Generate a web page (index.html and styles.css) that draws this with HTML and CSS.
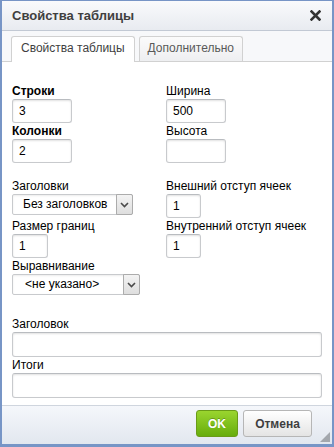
FILE: index.html
```html
<!DOCTYPE html>
<html lang="ru">
<head>
<meta charset="utf-8">
<title>Свойства таблицы</title>
<link rel="stylesheet" href="styles.css">
</head>
<body>
<div class="dialog">
  <div class="titlebar">
    <span class="title">Свойства таблицы</span>
    <svg class="close" width="11" height="11" viewBox="0 0 11 11"><path d="M1.5 1.5 L9.5 9.5 M9.5 1.5 L1.5 9.5" stroke="#333" stroke-width="2.6" stroke-linecap="square"/></svg>
  </div>
  <div class="tabs">
    <div class="tab active">Свойства таблицы</div>
    <div class="tab">Дополнительно</div>
  </div>
  <div class="body">
    <div class="grid2">
      <div class="col">
        <div class="field"><label class="lbl req">Строки</label><input class="txt w60" value="3"></div>
        <div class="field"><label class="lbl req">Колонки</label><input class="txt w60" value="2"></div>
      </div>
      <div class="col">
        <div class="field"><label class="lbl">Ширина</label><input class="txt w60" value="500"></div>
        <div class="field"><label class="lbl">Высота</label><input class="txt w60" value=""></div>
      </div>
    </div>
    <div class="grid2 sec-b">
      <div class="col">
        <div class="field"><label class="lbl">Заголовки</label>
          <div class="ctl"><div class="select w121"><span class="val">Без заголовков</span><span class="arrow"><svg width="9" height="6" viewBox="0 0 9 6"><path d="M1 1 L4.5 4.5 L8 1" fill="none" stroke="#4a4a4a" stroke-width="1.6"/></svg></span></div></div>
        </div>
        <div class="field"><label class="lbl">Размер границ</label><input class="txt w36" value="1"></div>
        <div class="field"><label class="lbl">Выравнивание</label>
          <div class="ctl"><div class="select w128"><span class="val pad12">&lt;не указано&gt;</span><span class="arrow"><svg width="9" height="6" viewBox="0 0 9 6"><path d="M1 1 L4.5 4.5 L8 1" fill="none" stroke="#4a4a4a" stroke-width="1.6"/></svg></span></div></div>
        </div>
      </div>
      <div class="col">
        <div class="field"><label class="lbl">Внешний отступ ячеек</label><input class="txt w35" value="1"></div>
        <div class="field"><label class="lbl">Внутренний отступ ячеек</label><input class="txt w35" value="1"></div>
      </div>
    </div>
    <div class="sec-c">
      <div class="field"><label class="lbl">Заголовок</label><input class="txt wide" value=""></div>
      <div class="field"><label class="lbl">Итоги</label><input class="txt wide" value=""></div>
    </div>
  </div>
  <div class="footer">
    <button class="btn ok">OK</button>
    <button class="btn cancel">Отмена</button>
    <svg class="grip" width="10" height="10" viewBox="0 0 10 10"><path d="M10 0 L10 10 L0 10 Z" fill="#a3a7ad"/></svg>
  </div>
</div>
</body>
</html>
```
FILE: styles.css
```css
* { box-sizing: border-box; }
html, body { margin: 0; padding: 0; }
body {
  width: 334px;
  height: 447px;
  overflow: hidden;
  font-family: "Liberation Sans", Arial, sans-serif;
  font-size: 12px;
  color: #000;
  background: #fff;
}
.dialog {
  width: 334px;
  height: 447px;
  border: 2px solid #7795c6;
  border-top-width: 1px;
  border-bottom-width: 3px;
  display: flex;
  flex-direction: column;
  background: #fff;
}
.titlebar {
  flex: none;
  height: 30px;
  display: flex;
  align-items: center;
  justify-content: space-between;
  padding: 0 11px 0 10px;
  background: linear-gradient(#f9fafc, #e8ebf0);
  border-bottom: 1px solid #c2c9d4;
}
.title {
  font-weight: bold;
  font-size: 13px;
  color: #3f3f3f;
}
.close { display: block; margin-top: -1px; }
.tabs {
  flex: none;
  height: 31px;
  display: flex;
  align-items: flex-end;
  gap: 4px;
  padding-left: 9px;
  background: #f7f8fa;
  border-bottom: 1px solid #d1d1d1;
}
.tab {
  height: 25px;
  line-height: 23px;
  padding: 0 8px;
  border: 1px solid #d1d1d1;
  border-bottom: none;
  border-radius: 3px 3px 0 0;
  background: linear-gradient(#fbfbfb, #eeeff1);
  color: #595959;
  font-size: 12px;
}
.tab.active {
  height: 26px;
  margin-bottom: -1px;
  padding: 0 9px;
  background: #fff;
  color: #3f3f3f;
}
.body {
  flex: 1;
  padding: 21px 10px 0 10px;
}
.grid2 {
  display: grid;
  grid-template-columns: 154px 1fr;
}
.field { display: flex; flex-direction: column; align-items: flex-start; }
.lbl {
  display: block;
  height: 16px;
  line-height: 16px;
  white-space: nowrap;
}
.lbl.req { font-weight: bold; }
.txt {
  display: block;
  height: 24px;
  margin: 0;
  padding: 0 6px;
  border: 1px solid #c8cacd;
  border-top-color: #b9bcc0;
  border-radius: 3px;
  box-shadow: inset 0 1px 2px rgba(0,0,0,.12);
  background: #fff;
  font: 12px "Liberation Sans", Arial, sans-serif;
  color: #000;
  outline: none;
}
.w60 { width: 60px; }
.w36 { width: 36px; }
.w35 { width: 35px; }
.wide { width: 310px; height: 25px; }
.ctl { height: 24px; }
.select {
  display: flex;
  align-items: stretch;
  height: 21px;
  border: 1px solid #c8cacd;
  border-radius: 2px;
  box-shadow: inset 0 1px 2px rgba(0,0,0,.08);
  background: #fff;
}
.w121 { width: 121px; }
.w128 { width: 128px; }
.select .val {
  flex: 1;
  padding-left: 10px;
  line-height: 19px;
  white-space: nowrap;
  overflow: hidden;
}
.select .val.pad12 { padding-left: 12px; }
.select .arrow {
  width: 17px;
  margin: -1px -1px -1px 0;
  border: 1px solid #acacac;
  border-radius: 0 2px 2px 0;
  background: linear-gradient(#f3f3f3, #dedede);
  display: flex;
  align-items: center;
  justify-content: center;
}
.sec-b { margin-top: 15px; }
.sec-c { margin-top: 18px; }
.footer {
  flex: none;
  height: 39px;
  display: flex;
  align-items: flex-start;
  justify-content: flex-end;
  gap: 5px;
  padding-top: 4px;
  border-top: 1px solid #cfd5de;
  background: linear-gradient(#f5f7fb, #e2e7ef);
}
.btn {
  height: 27px;
  margin: 0;
  padding: 0;
  border-radius: 3px;
  font: bold 12px "Liberation Sans", Arial, sans-serif;
  cursor: pointer;
}
.ok {
  width: 42px;
  border: 1px solid #6a9b18;
  background: linear-gradient(#9ad52f, #67ad0c);
  color: #fff;
  text-shadow: 0 -1px 0 rgba(0,0,0,.25);
}
.cancel {
  width: 69px;
  border: 1px solid #b6b6b6;
  background: linear-gradient(#ffffff, #e4e4e4);
  color: #3f3f3f;
}
.grip {
  align-self: flex-end;
  margin: 0 2px 2px 3px;
  display: block;
}
```
